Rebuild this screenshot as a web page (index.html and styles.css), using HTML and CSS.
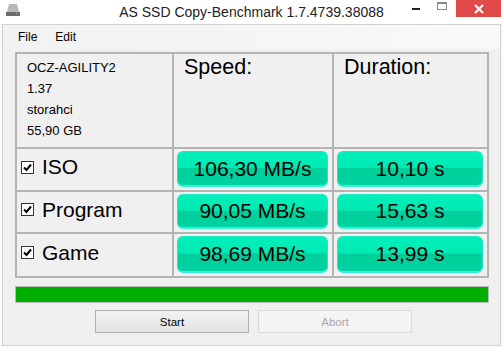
FILE: index.html
```html
<!DOCTYPE html>
<html>
<head>
<meta charset="UTF-8">
<title>AS SSD Copy-Benchmark</title>
<link rel="stylesheet" href="styles.css">
</head>
<body>
<div class="window">
 <div class="titlebar">
  <div class="tb-left">
   <svg class="appicon" width="16" height="14" viewBox="0 0 16 14">
    <path d="M4 1 L12 1 L14 9 L2 9 Z" fill="#b9b9b9"/>
    <rect x="1" y="9" width="14" height="4" fill="#6b6b6b"/>
    <rect x="11" y="10" width="2" height="1" fill="#3ad23a"/>
   </svg>
  </div>
  <div class="title">AS SSD Copy-Benchmark 1.7.4739.38088</div>
  <div class="caption">
   <div class="cbtn"><span class="min"></span></div>
   <div class="cbtn"><span class="max"></span></div>
   <div class="close">
    <svg width="10" height="10" viewBox="0 0 10 10"><path d="M1 1 L9 9 M9 1 L1 9" stroke="#fff" stroke-width="2"/></svg>
   </div>
  </div>
 </div>
 <div class="frame">
  <div class="client">
   <div class="menu">
    <span>File</span>
    <span>Edit</span>
   </div>
   <div class="content">
    <div class="bench">
     <div class="cell info">OCZ-AGILITY2<br>1.37<br>storahci<br>55,90 GB</div>
     <div class="cell head">Speed:</div>
     <div class="cell head">Duration:</div>

     <div class="cell label"><svg class="chk" width="13" height="13" viewBox="0 0 13 13"><rect x="0.5" y="0.5" width="12" height="12" fill="#fff" stroke="#333"/><path d="M3 6.5 L5.5 9 L10 3.5" fill="none" stroke="#000" stroke-width="2"/></svg>ISO</div>
     <div class="cell val"><div class="res">106,30 MB/s</div></div>
     <div class="cell val"><div class="res">10,10 s</div></div>

     <div class="cell label"><svg class="chk" width="13" height="13" viewBox="0 0 13 13"><rect x="0.5" y="0.5" width="12" height="12" fill="#fff" stroke="#333"/><path d="M3 6.5 L5.5 9 L10 3.5" fill="none" stroke="#000" stroke-width="2"/></svg>Program</div>
     <div class="cell val"><div class="res">90,05 MB/s</div></div>
     <div class="cell val"><div class="res">15,63 s</div></div>

     <div class="cell label"><svg class="chk" width="13" height="13" viewBox="0 0 13 13"><rect x="0.5" y="0.5" width="12" height="12" fill="#fff" stroke="#333"/><path d="M3 6.5 L5.5 9 L10 3.5" fill="none" stroke="#000" stroke-width="2"/></svg>Game</div>
     <div class="cell val"><div class="res">98,69 MB/s</div></div>
     <div class="cell val"><div class="res">13,99 s</div></div>
    </div>
    <div class="progress"><div class="fill"></div></div>
    <div class="buttons">
     <button class="btn">Start</button>
     <button class="btn" disabled>Abort</button>
    </div>
   </div>
  </div>
 </div>
</div>
</body>
</html>
```

FILE: styles.css
```css
body{
 margin: 0;
 font-family: "Liberation Sans", Arial, sans-serif;
 background: #fff;
}
.window{
 width: 503px;
 height: 348px;
 display: flex;
 flex-direction: column;
 background: #f9f9f9;
}
.titlebar{
 height: 24px;
 background: #fff;
 display: grid;
 grid-template-columns: 1fr auto 1fr;
}
.tb-left{
 padding: 3px 0 0 5px;
}
.title{
 font-size: 14px;
 line-height: 24px;
 color: #222;
}
.caption{
 display: flex;
 justify-content: flex-end;
 align-items: flex-start;
}
.cbtn{
 width: 26px;
 height: 17px;
 display: flex;
 justify-content: center;
 align-items: flex-start;
}
.min{
 width: 8px;
 height: 2px;
 background: #222;
 margin-top: 8px;
}
.max{
 width: 8px;
 height: 5px;
 border: 1px solid #8a8a8a;
 border-top-width: 2px;
 margin-top: 2px;
}
.close{
 width: 45px;
 height: 17px;
 margin: 0 2px 0 1px;
 background: #e24a4a;
 display: flex;
 justify-content: center;
 align-items: center;
}
.frame{
 flex: 1;
 padding: 0 2px 2px 2px;
 display: flex;
}
.client{
 flex: 1;
 border: 1px solid #d2d2d2;
 background: #f0f0f0;
 display: flex;
 flex-direction: column;
}
.menu{
 height: 24px;
 line-height: 24px;
 font-size: 12px;
 padding-left: 15px;
 display: flex;
 gap: 18px;
 background: linear-gradient(to right, #f2f2f2, #f9f9f9);
}
.content{
 padding: 3px 11px 0 12px;
}
.bench{
 display: grid;
 grid-template-columns: 155px 158px 153px;
 grid-template-rows: 93px 41px 40px 42px;
 gap: 2px;
 padding: 2px;
 background: #b4b4b4;
}
.cell{
 background: #f0f0f0;
}
.info{
 font-size: 13px;
 line-height: 21px;
 padding: 3px 0 0 10px;
}
.head{
 font-size: 21.5px;
 padding: 1px 0 0 10px;
}
.label{
 font-size: 21px;
 display: flex;
 align-items: center;
 padding: 0 0 5px 4px;
}
.chk{
 margin-right: 8px;
}
.val{
 padding: 2px 4px 3px 3px;
 display: flex;
}
.res{
 flex: 1;
 border-radius: 6px;
 border: 1px solid #1ee9c6;
 border-bottom: 2px solid #33efdc;
 background: linear-gradient(to bottom, #00f0bc 0%, #00e9b3 48%, #00cf9b 50%, #00d3a0 100%);
 font-size: 21px;
 display: flex;
 justify-content: center;
 align-items: center;
}
.progress{
 margin-top: 8px;
 height: 15px;
 border: 1px solid #bcbcbc;
 background: #e6e6e6;
}
.fill{
 height: 100%;
 background: #00b000;
}
.buttons{
 margin-top: 7px;
 padding-left: 80px;
 display: flex;
 gap: 9px;
}
.btn{
 width: 154px;
 height: 23px;
 font-family: "Liberation Sans", Arial, sans-serif;
 font-size: 11.5px;
 color: #000;
 border: 1px solid #adadad;
 background: linear-gradient(#f2f2f2, #e4e4e4);
 padding: 0;
}
.btn:disabled{
 color: #a8a8a8;
 border-color: #d9d9d9;
 background: #f4f4f4;
}
```
